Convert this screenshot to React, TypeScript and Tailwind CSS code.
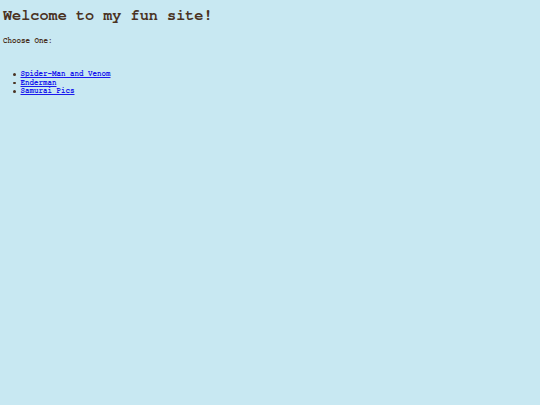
export default function App() {
  const links = ["Spider-Man and Venom", "Enderman", "Samurai Pics"];
  return (
    <div
      className="min-h-screen bg-[#c8e8f2] px-[3px] pt-[7px] text-[#4a3222]"
      style={{ fontFamily: '"Nimbus Mono PS", "FreeMono", "Courier New", "Liberation Mono", monospace' }}
    >
      <h1 className="text-[15.2px] font-bold leading-[18px]">Welcome to my fun site!</h1>
      <p className="mt-[12px] text-[7.5px] font-bold leading-[9px]">Choose One:</p>
      <ul className="mt-[24px] pl-[10px] text-[7.5px] font-bold leading-[8.5px]">
        {links.map((l) => (
          <li key={l} className="flex items-center gap-[5px]">
            <span className="h-[2.5px] w-[2.5px] rounded-full bg-[#4a3222]" />
            <a href="#" className="text-[#1a1aee] underline">
              {l}
            </a>
          </li>
        ))}
      </ul>
    </div>
  );
}
